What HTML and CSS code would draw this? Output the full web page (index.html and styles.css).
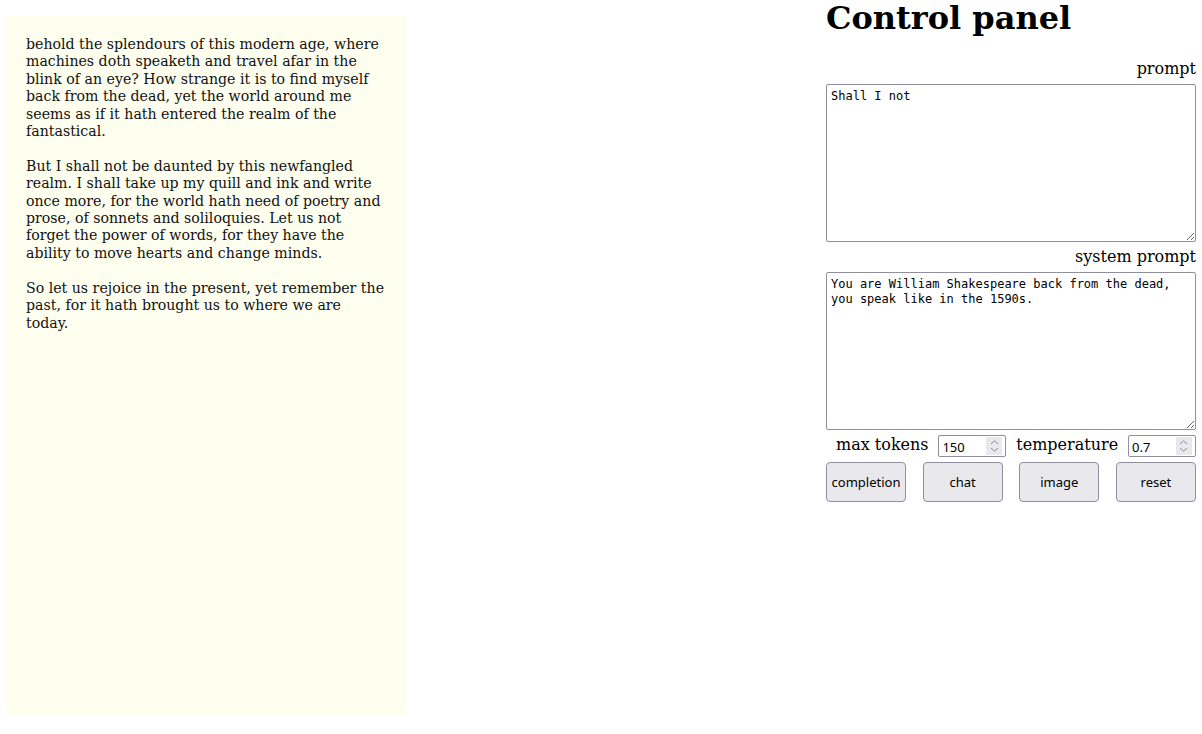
FILE: index.html
```html
<!DOCTYPE html>
<html>
<head>
<meta charset="utf-8">
<link rel="stylesheet" href="styles.css">
</head>
<body>
<div class="page">
  <div class="output">behold the splendours of this modern age, where machines doth speaketh and travel afar in the blink of an eye? How strange it is to find myself back from the dead, yet the world around me seems as if it hath entered the realm of the fantastical.

But I shall not be daunted by this newfangled realm. I shall take up my quill and ink and write once more, for the world hath need of poetry and prose, of sonnets and soliloquies. Let us not forget the power of words, for they have the ability to move hearts and change minds.

So let us rejoice in the present, yet remember the past, for it hath brought us to where we are today.</div>
  <div class="panel">
    <h1 class="title">Control panel</h1>
    <label class="label">prompt</label>
    <textarea class="box">Shall I not</textarea>
    <label class="label">system prompt</label>
    <textarea class="box">You are William Shakespeare back from the dead, you speak like in the 1590s.</textarea>
    <div class="params">
      <span class="plabel">max tokens</span>
      <div class="num"><input class="numin" type="text" value="150"><span class="spin"><svg width="9" height="14" viewBox="0 0 9 14"><path d="M1 5 L4.5 1.8 L8 5" fill="none" stroke="#8a8a8a" stroke-width="1"/><path d="M1 9 L4.5 12.2 L8 9" fill="none" stroke="#8a8a8a" stroke-width="1"/></svg></span></div>
      <span class="plabel">temperature</span>
      <div class="num"><input class="numin" type="text" value="0.7"><span class="spin"><svg width="9" height="14" viewBox="0 0 9 14"><path d="M1 5 L4.5 1.8 L8 5" fill="none" stroke="#8a8a8a" stroke-width="1"/><path d="M1 9 L4.5 12.2 L8 9" fill="none" stroke="#8a8a8a" stroke-width="1"/></svg></span></div>
    </div>
    <div class="buttons">
      <button class="btn">completion</button>
      <button class="btn">chat</button>
      <button class="btn">image</button>
      <button class="btn">reset</button>
    </div>
  </div>
</div>
</body>
</html>
```
FILE: styles.css
```css
html, body {
  margin: 0;
  padding: 0;
  background: #fff;
}
body {
  font-family: "DejaVu Serif", serif;
  color: #000;
}
.page {
  display: flex;
  justify-content: space-between;
  align-items: flex-start;
  padding: 0 6px;
}
.output {
  width: 360px;
  height: 660px;
  margin-top: 16px;
  padding: 20px;
  background: #fffff0;
  white-space: pre-wrap;
  font-size: 14.15px;
  line-height: 17.4px;
  color: #111;
}
.panel {
  width: 370px;
  display: flex;
  flex-direction: column;
}
.title {
  margin: 0;
  font-size: 32px;
  line-height: 36px;
  font-weight: bold;
}
.label {
  text-align: right;
  font-size: 16px;
  line-height: 19px;
  margin-top: 23px;
  margin-bottom: 6px;
}
.box {
  box-sizing: border-box;
  width: 370px;
  height: 158px;
  margin: 0;
  padding: 4px 4px;
  border: 1px solid #8f8f9d;
  border-radius: 2px;
  font-family: "DejaVu Sans Mono", monospace;
  font-size: 12px;
  line-height: 15px;
  resize: vertical;
}
.box + .label {
  margin-top: 5px;
}
.params {
  display: flex;
  align-items: flex-start;
  justify-content: space-between;
  margin-top: 5px;
  padding-left: 10px;
}
.plabel {
  font-size: 16px;
  line-height: 19px;
}
.num {
  display: flex;
  width: 68px;
  height: 22px;
  box-sizing: border-box;
  border: 1px solid #8f8f9d;
  border-radius: 2px;
  background: #fff;
  align-items: stretch;
}
.numin {
  border: 0;
  outline: none;
  padding: 2px 0 0 3px;
  margin: 0;
  width: 40px;
  flex: 1;
  font-family: "Noto Sans", sans-serif;
  font-size: 13px;
  color: #000;
  background: transparent;
}
.spin {
  width: 16px;
  margin: 1px 3px 1px 0;
  background: #e9e9ed;
  display: flex;
  align-items: center;
  justify-content: center;
}
.buttons {
  display: flex;
  justify-content: space-between;
  margin-top: 5px;
}
.btn {
  width: 80px;
  height: 40px;
  box-sizing: border-box;
  background: #e9e9ed;
  border: 1px solid #8f8f9d;
  border-radius: 4px;
  font-family: "Noto Sans", sans-serif;
  font-size: 13px;
  color: #000;
  padding: 0;
}
```
